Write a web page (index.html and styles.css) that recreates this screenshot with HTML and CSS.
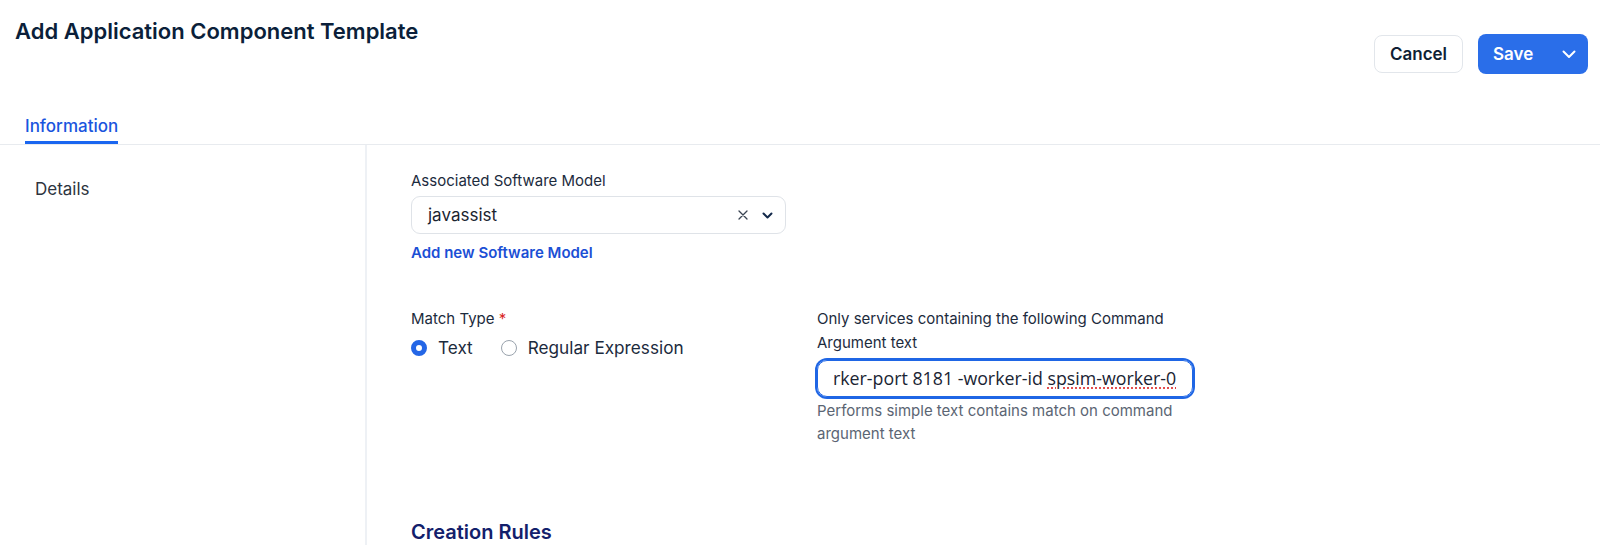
FILE: index.html
```html
<!DOCTYPE html>
<html lang="en">
<head>
  <meta charset="UTF-8">
  <meta name="viewport" content="width=device-width, initial-scale=1">
  <title>Add Application Component Template</title>
  <link rel="stylesheet" href="styles.css">
</head>
<body>

  <div class="page-header">
    <h1>Add Application Component Template</h1>
    <div class="actions">
      <button class="btn btn-secondary">Cancel</button>
      <button class="btn btn-primary">
        <span>Save</span>
        <svg width="16" height="16" viewBox="0 0 16 16" fill="none" stroke="currentColor" stroke-width="2" stroke-linecap="round" stroke-linejoin="round"><path d="M2.5 5.5 8 11l5.5-5.5"/></svg>
      </button>
    </div>
  </div>

  <div class="tabs">
    <div class="tab active">Information</div>
  </div>

  <div class="layout">
    <div class="sidebar">
      <div class="side-item">Details</div>
    </div>

    <div class="content">
      <div class="field">
        <label class="label">Associated Software Model</label>
        <div class="select">
          <span class="select-value">javassist</span>
          <span class="select-icons">
            <svg width="10" height="10" viewBox="0 0 10 10" fill="none" stroke="#3a4452" stroke-width="1.3" stroke-linecap="round"><path d="M1 1l8 8M9 1l-8 8"/></svg>
            <svg width="11" height="11" viewBox="0 0 11 11" fill="none" stroke="#13294b" stroke-width="2" stroke-linecap="round" stroke-linejoin="round"><path d="M1.5 3.5 5.5 7.5l4-4"/></svg>
          </span>
        </div>
        <a class="link" href="#">Add new Software Model</a>
      </div>

      <div class="match-row">
        <div class="match-col">
          <div class="label">Match Type <span class="required">*</span></div>
          <div class="radios">
            <label class="radio"><span class="radio-dot checked"></span>Text</label>
            <label class="radio"><span class="radio-dot"></span>Regular Expression</label>
          </div>
        </div>
        <div class="arg-col">
          <div class="label">Only services containing the following Command Argument text</div>
          <div class="text-input focused">rker-port 8181 -worker-id <span class="misspelled">spsim-worker-0</span></div>
          <div class="help">Performs simple text contains match on command argument text</div>
        </div>
      </div>

      <h2 class="section-title">Creation Rules</h2>
    </div>
  </div>

</body>
</html>
```

FILE: styles.css
```css
* {
  box-sizing: border-box;
  margin: 0;
  padding: 0;
}

body {
  font-family: Inter, "Noto Sans", sans-serif;
  background-color: #ffffff;
  color: #1c2b3d;
  height: 545px;
  overflow: hidden;
}

.page-header {
  display: flex;
  justify-content: space-between;
  align-items: flex-start;
  padding: 17px 12px 0 15px;
  height: 114px;
}

h1 {
  font-size: 22px;
  line-height: 28px;
  font-weight: 600;
  color: #0b1f3a;
}

.actions {
  display: flex;
  align-items: center;
  gap: 15px;
  margin-top: 17px;
}

.btn {
  font-family: Inter, sans-serif;
  font-size: 17px;
  font-weight: 600;
  border-radius: 8px;
  cursor: pointer;
}

.btn-secondary {
  height: 38px;
  width: 89px;
  background: #fff;
  color: #0f1f35;
  border: 1px solid #e2e6eb;
}

.btn-primary {
  height: 40px;
  width: 110px;
  background: #2a6ee9;
  color: #fff;
  border: none;
  display: flex;
  align-items: center;
  justify-content: space-between;
  padding: 0 11px 0 15px;
}

.tabs {
  display: flex;
  padding-left: 25px;
  border-bottom: 1px solid #e8ebef;
  height: 31px;
}

.tab {
  font-size: 17px;
  line-height: 24px;
  font-weight: 500;
  color: #1a55de;
  padding-bottom: 3px;
  border-bottom: 3px solid #1a66f0;
  height: 30px;
}

.layout {
  display: flex;
  height: 400px;
}

.sidebar {
  width: 367px;
  border-right: 2px solid #eef1f5;
  padding: 32px 0 0 35px;
}

.side-item {
  font-size: 17px;
  line-height: 24px;
  color: #2d3440;
}

.content {
  padding: 26px 0 0 44px;
}

.label {
  font-size: 15px;
  line-height: 20px;
  color: #1c2b3d;
}

.field .label {
  display: block;
  margin-bottom: 5px;
}

.select {
  width: 375px;
  height: 38px;
  border: 1px solid #dfe3e8;
  border-radius: 9px;
  display: flex;
  align-items: center;
  justify-content: space-between;
  padding: 0 12px 0 16px;
}

.select-value {
  font-size: 17px;
  color: #1c2430;
}

.select-icons {
  display: flex;
  align-items: center;
  gap: 14px;
}

.link {
  display: inline-block;
  margin-top: 9px;
  font-size: 15px;
  line-height: 20px;
  font-weight: 600;
  color: #1b4fd5;
  text-decoration: none;
}

.match-row {
  display: flex;
  margin-top: 44px;
}

.match-col {
  width: 406px;
}

.match-col .label {
  line-height: 24px;
}

.required {
  color: #d92626;
}

.radios {
  display: flex;
  gap: 28px;
  margin-top: 5px;
}

.radio {
  display: flex;
  align-items: center;
  gap: 11px;
  font-size: 17.2px;
  line-height: 24px;
  color: #1c2b3d;
}

.radio-dot {
  width: 16px;
  height: 16px;
  border-radius: 50%;
  border: 1px solid #9aa3ad;
}

.radio-dot.checked {
  border: 5px solid #2466e6;
  background: #fff;
}

.arg-col {
  width: 376px;
}

.arg-col .label {
  line-height: 24px;
}

.text-input {
  height: 37px;
  margin-top: 5px;
  border: 1px solid #1f66e5;
  border-radius: 10px;
  box-shadow: 0 0 0 2px #1f66e5;
  padding: 0 12px 0 15px;
  font-family: "Open Sans", sans-serif;
  font-size: 17.8px;
  line-height: 35px;
  color: #1a2433;
  white-space: nowrap;
  overflow: hidden;
}

.misspelled {
  text-decoration: underline dotted #e03a3a;
  text-underline-offset: 3px;
}

.help {
  margin-top: 2px;
  font-size: 15px;
  line-height: 23px;
  color: #5b6573;
}

.section-title {
  margin-top: 74px;
  font-size: 20px;
  line-height: 26px;
  font-weight: 600;
  color: #13206b;
}
```
